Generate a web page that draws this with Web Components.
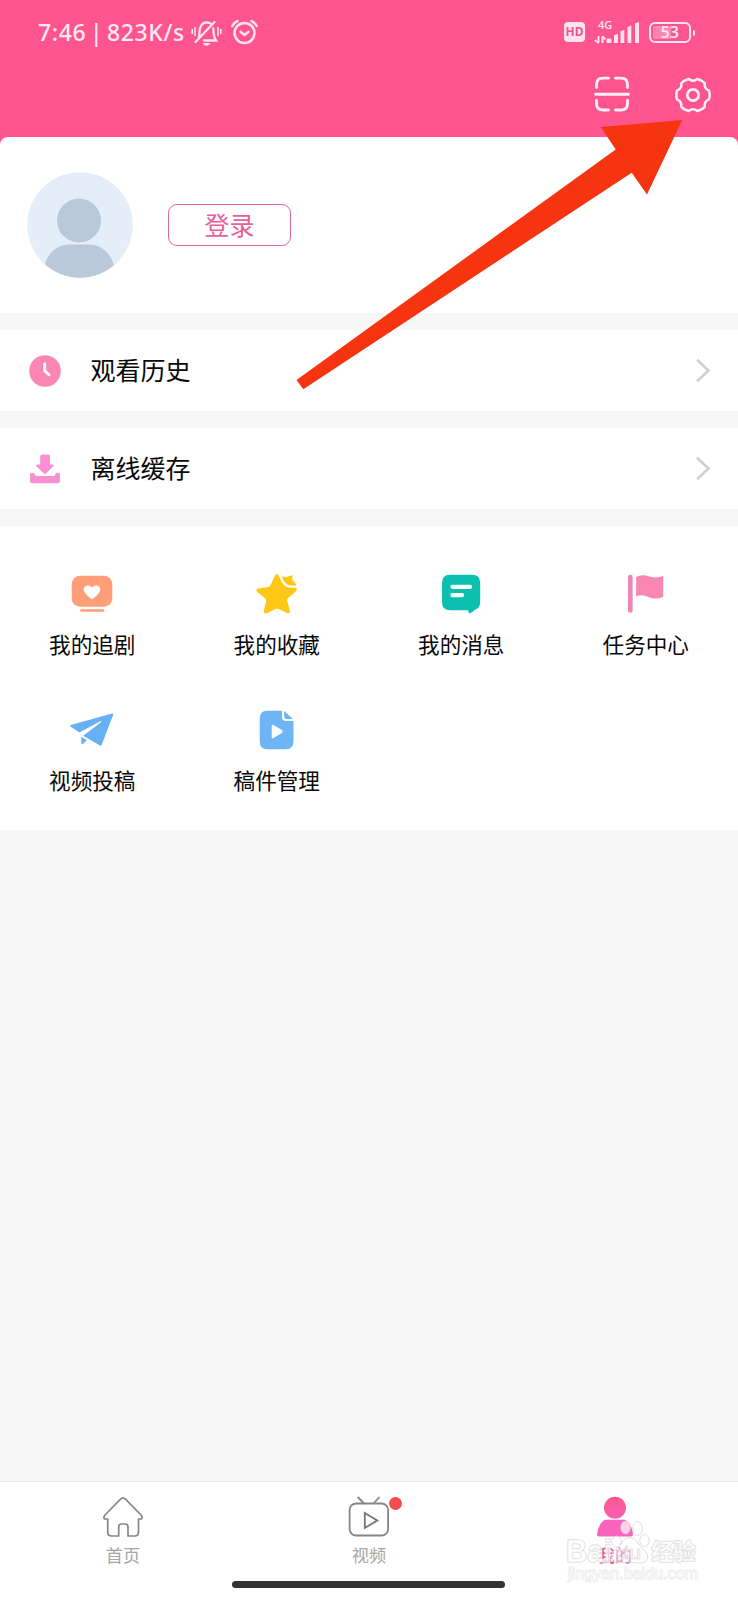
<!DOCTYPE html>
<html lang="zh-CN">
<head>
<meta charset="utf-8">
<title>我的</title>
<style>
html,body{margin:0;padding:0}
body{width:738px;height:1600px;overflow:hidden;background:#f7f7f7;font-family:"Noto Sans","Noto Sans CJK SC",sans-serif}
</style>
</head>
<body>
<my-app></my-app>
<script>
const define=(name,html)=>customElements.define(name,class extends HTMLElement{
  constructor(){super();const t=document.createElement('template');
    t.innerHTML=typeof html==='function'?html(this):html;
    this.attachShadow({mode:'open'}).append(t.content.cloneNode(true));}
});

// Six-lobed outline of the settings gear, centred on (18,18)
const gearPath=()=>{
  const p=(a,r)=>(18+r*Math.cos(a*Math.PI/180)).toFixed(2)+' '+(18+r*Math.sin(a*Math.PI/180)).toFixed(2);
  let d='M'+p(-15,16.6);
  for(let k=0;k<6;k++){const a=60*k;d+='Q'+p(a-8,16.7)+' '+p(a,16.7)+'Q'+p(a+8,16.7)+' '+p(a+15,16.6)+'Q'+p(a+30,12.6)+' '+p(a+45,16.6);}
  return d+'Z';
};

const icons={
bell:[31,26,`<g fill="none" stroke="#ffe3ef" stroke-width="2.3" stroke-linecap="round"><path d="M7 19.5C8.500 17 8.500 15 8.500 12C8.500 7 11 2.500 15.500 2.500C18 2.500 19.500 3 20.500 4.500M22.300 8.500C22.500 13 22.500 17 25 20.500H13M4.500 22L23.500 2"/><path d="M1.200 9.500v4M4 7.500v8M27 7.500v8M29.800 9.500v4" stroke-width="1.600"/></g><path d="M11.500 23h8q-1 2.700-4 2.700T11.500 23z" fill="#ffe3ef"/>`],
alarm:[27,25,`<g fill="none" stroke="#ffe3ef" stroke-width="2.500" stroke-linecap="round" stroke-linejoin="round"><circle cx="13.500" cy="13" r="10"/><path d="M9.500 11.700l4 3.300 4-3.300M1.300 6Q3 2.500 6.500 1M25.700 6Q24 2.500 20.500 1"/></g>`],
signal:[46,24,`<g fill="#ffe3ef"><rect x="12.500" y="18.500" width="5" height="4.500" rx="1.500"/><path d="M20 15.300l4-1.500V23h-4zM26.500 11.200l3.800-1.500V23h-3.800zM33.500 7l3.800-1.600V23h-3.800zM41 3.500L45 2V23h-4z"/></g><path d="M4.500 16v7M4.500 23L.8 20M8.500 23v-7M8.500 16.300l3 3" fill="none" stroke="#ffe3ef" stroke-width="1.900"/>`],
scan:[36,36,`<g fill="none" stroke="#fff0f6" stroke-width="2.800" stroke-linecap="round"><path d="M2.500 11.500V9Q2.500 2.200 9 2.200H14.500M21.500 2.200H27Q33.500 2.200 33.500 9V11.500M2.500 24.500V27.500Q2.500 34 9 34H14.500M21.500 34H27Q33.500 34 33.500 27.500V24.500"/><path d="M.5 18.300H35.500" stroke-linecap="butt" stroke-width="3"/></g>`],
gear:[36,36,`<g fill="none" stroke="#fff0f6" stroke-width="2.500" stroke-linejoin="round"><path d="${gearPath()}"/><circle cx="18" cy="18" r="5.700" stroke-width="2.700"/></g>`],
avatar:[106,106,`<clipPath id="c"><circle cx="53" cy="53" r="52.700"/></clipPath><circle cx="53" cy="53" r="52.700" fill="#e3eef8"/><g clip-path="url(#c)" fill="#bac9da"><circle cx="52" cy="48.500" r="22"/><path d="M15 110Q17 72.500 43 72.500H62Q86 72.500 91 110z"/></g>`],
clock:[32,32,`<circle cx="16" cy="16" r="15.800" fill="#fc87b4"/><path d="M15.700 9V15.800L20 19.800" fill="none" stroke="#fff" stroke-width="2.900" stroke-linecap="round" stroke-linejoin="round"/>`],
download:[32,30,`<path fill="#fb8fd2" d="M13.500.5H19Q21 .5 21 2.500V10.500H23.500Q25.800 10.500 24.200 12.300L17 19.500Q15.900 20.500 14.800 19.500L7.500 12.300Q6.200 10.500 8.200 10.500H11.200V2.500Q11.200.5 13.500.5zM1 20.500Q1 18.700 3 18.700H4Q5.600 18.700 5.600 20.300Q5.600 22 7.300 22H24.700Q26.300 22 26.300 20.300Q26.300 18.700 28 18.700H29Q31 18.700 31 20.500V27Q31 29.200 29 29.200H3Q1 29.200 1 27z"/>`],
chevron:[16,25,`<path d="M2 1.800L13.500 12.500 2 23.200" fill="none" stroke="#cfcfcf" stroke-width="2.600"/>`],
drama:[42,40,`<rect x=".7" y="1.700" width="40.600" height="31" rx="8.500" fill="#ff9e79"/><path d="M10.500 36.500H32" stroke="#ff9e79" stroke-width="2.700" stroke-linecap="round"/><path d="M21 25.300Q19.800 25.300 14.500 19.600C11 15.500 13.200 11.500 16.800 11.500Q19.300 11.500 21 13.500Q22.700 11.500 25.200 11.500C28.800 11.500 31 15.500 27.500 19.600Q22.200 25.300 21 25.300z" fill="#fff"/>`],
star:[42,40,`<path fill="#ffc817" d="M19 1.500Q21 -1 22.700 1.500L24.900 6.300Q27.600 13.700 34.900 13.700H39Q42.300 14.500 40 17.300L31.700 24.600Q30.900 25.600 31.200 27L33.900 36.500Q34.300 40.300 30.900 39L22.600 35Q21 34.200 19.400 35L11 39.200Q7.500 40 7.800 36.700L10.200 27Q10.400 25.600 9.400 24.600L1.300 18.100Q-1.100 15.600 2 14.600L12.200 13Q13.800 12.700 14.500 11.300z"/><path fill="#ffc817" d="M26 2.300L30.700 3.200Q31.500 3.200 32 2.500L36.200 1.300Q36.800 1.300 36.500 2.500L36.200 5.500Q36.200 6.400 37.500 6.900L39.700 9.600Q40.900 11.200 39.500 11.400H33.500Q27.500 9.800 26 2.300z"/>`],
message:[40,40,`<path fill="#0bc0ae" d="M9 .8H31Q39.200.8 39.200 9V27.500Q39.200 34 34.500 35.500L29 39.400Q27.500 39.400 27 36.200H9Q1 36.200 1 28V9Q1 .8 9 .8z"/><path d="M11.500 12.800H29M11.500 21.200H21" stroke="#fff" stroke-width="4.200" stroke-linecap="round"/>`],
flag:[38,40,`<path d="M3.300 3.200V36.500" stroke="#ef87b4" stroke-width="4.700" stroke-linecap="round"/><path fill="#fa86b2" d="M9.100 3Q14.500 -.1 22.500 2.500Q29.500 4.500 36.200 2V23Q28.500 26 21.500 23Q14.500 20 9.100 22.500z"/>`],
plane:[44,36,`<path fill="#67b0f3" d="M.3 14.200Q-.2 13.300.8 13L42 1.500Q43.700 1.200 43.200 2.700L31.700 32.800Q31.200 34.100 30 33.500L13.200 23.800 31.300 9.900Q31.300 9 30.300 9.300L9.300 20.600zM11.300 24.800L17 28.200 12.200 32.200Q11.300 32.500 11.300 31.500z"/>`],
file:[36,40,`<path fill="#6fb4f5" d="M8 .8H23V7Q23 11 27 11H34.500V31Q34.500 39.200 27 39.200H8Q.7 39.200.7 31V9Q.7.8 8 .8z"/><path fill="#6fb4f5" d="M25.200 1L34 9H27Q25.200 9 25.200 7z"/><path fill="#fff" d="M12.700 16Q12.700 14 14.500 15L23 20Q24.600 21.500 23 23L14.500 28Q12.700 29 12.700 27z"/>`],
home:[42,42,`<path fill="none" stroke="#858688" stroke-width="1.700" stroke-linejoin="round" d="M18.500 3.200Q21 .5 23.500 3.200L39 19Q41 21.500 39.500 23H36.500V36Q36.500 40 32.700 40H26V31Q26 28 23 28H19.500Q16.700 28 16.700 31V40H9.800Q5.700 40 5.700 36V23H2.500Q1 21.500 3 19z"/>`],
video:[42,42,`<g fill="none" stroke="#858688" stroke-width="1.800"><rect x="1.600" y="7.500" width="38.500" height="32" rx="6.500"/><path d="M9.700 1L16 7.500M31.500 1L25.500 7.500"/><path d="M16.800 17L29.300 24.500 16.800 32z" stroke="#737476"/></g>`],
person:[42,42,`<defs><linearGradient id="g" x1="0" y1="0" x2="0" y2="1"><stop stop-color="#fc5792"/><stop offset="1" stop-color="#f960b4"/></linearGradient></defs><circle cx="21" cy="11.800" r="11" fill="url(#g)"/><path fill="#fa63bd" d="M10.500 23.800H31.500Q38 28.500 39 38.500Q39 40.500 37 40.500H5Q3 40.500 3 38.500Q4 28.500 10.500 23.800z"/>`]
};
define('app-icon',h=>{const[w,ht,body]=icons[h.getAttribute('name')];
  return `<style>:host{display:block;flex:none;width:${w}px;height:${ht}px}svg{display:block;overflow:visible}</style><svg width="${w}" height="${ht}" viewBox="0 0 ${w} ${ht}">${body}</svg>`;});

define('status-bar',`<style>
:host{display:flex;align-items:flex-start;height:64px;padding:0 43px 0 38px;box-sizing:border-box;color:#ffe9f2;font-family:"Noto Sans",sans-serif}
.time{font-size:23px;line-height:30px;margin-top:17px;width:153px;letter-spacing:.65px;word-spacing:-3px;font-weight:500;white-space:nowrap}
.bell{margin-top:20px}.alarm{margin:20px 0 0 9px}
.right{margin-left:auto;display:flex;align-items:flex-start}
.hd{margin-top:22px;width:21px;height:20px;border-radius:4px;background:#ffe3ef;color:#f0558f;font:bold 12px/20px "Open Sans",sans-serif;text-align:center}
.net{position:relative;margin:20px 0 0 9px}
.net span{position:absolute;left:4px;top:-1px;font:600 11px/12px "Open Sans",sans-serif}
.bat{display:flex;align-items:center;margin:22px 0 0 9px}
.cell{box-sizing:border-box;width:42px;height:21px;border:2px solid #ffe3ef;border-radius:6px;padding:2px}
.fill{height:13px;background:linear-gradient(90deg,#ff86b1 0 53%,transparent 53%);border-radius:2px;text-align:center;font:600 15.500px/13px "Open Sans",sans-serif;letter-spacing:.5px;color:#fff0f6}
.tip{width:2px;height:6px;margin-left:2px;background:#ffe3ef;border-radius:0 2px 2px 0}
</style>
<div class="time">7:46 | 823K/s</div><app-icon class="bell" name="bell"></app-icon><app-icon class="alarm" name="alarm"></app-icon>
<div class="right"><div class="hd">HD</div><div class="net"><app-icon name="signal"></app-icon><span>4G</span></div><div class="bat"><div class="cell"><div class="fill">53</div></div><div class="tip"></div></div></div>`);

define('top-bar',`<style>
:host{display:flex;justify-content:flex-end;gap:45px;height:73px;padding:12px 27.500px 0 0;box-sizing:border-box}
app-icon+app-icon{margin-top:.5px}
</style><app-icon name="scan"></app-icon><app-icon name="gear"></app-icon>`);

define('profile-card',`<style>
:host{display:block;background:#ff558f}
.card{display:flex;align-items:center;gap:35px;height:176px;padding:0 27px;box-sizing:border-box;background:#fff;border-radius:8px 8px 0 0}
button{width:123px;height:42px;margin:0;padding:0;border:1px solid #dc6a9f;border-radius:9px;background:#fff;color:#e85e98;font:25px/38px "Noto Sans CJK SC",sans-serif}
span{position:relative;top:-1px}
</style><div class="card"><app-icon name="avatar"></app-icon><button><span><slot></slot></span></button></div>`);

define('list-row',h=>`<style>
:host{display:flex;align-items:center;height:81px;padding:0 27px 0 28.500px;box-sizing:border-box;background:#fff}
span{margin-left:30px;flex:1;font:25px/36px "Noto Sans CJK SC",sans-serif;color:#080808;padding-bottom:2.500px}
</style><app-icon name="${h.getAttribute('icon')}"></app-icon><span><slot></slot></span><app-icon name="chevron"></app-icon>`);

define('grid-item',h=>`<style>
:host{display:flex;flex-direction:column;align-items:center;height:136px}
.i{height:40px;display:flex;align-items:center}
span{margin-top:14px;font:21.600px/32px "Noto Sans CJK SC",sans-serif;color:#080808}
</style><div class="i"><app-icon name="${h.getAttribute('icon')}"></app-icon></div><span><slot></slot></span>`);

define('tool-grid',`<style>
:host{display:grid;grid-template-columns:repeat(4,1fr);align-content:start;height:304px;padding-top:48px;box-sizing:border-box;background:#fff}
</style><slot></slot>`);

define('nav-item',h=>`<style>
:host{display:flex;flex-direction:column;align-items:center;padding-top:14px;color:#a6a6a6}
:host([active]){color:#de5794}
.i{position:relative}
.dot{position:absolute;left:41px;top:1px;width:13px;height:13px;border-radius:50%;background:#f54e4e}
span{margin-top:5px;font:17.200px/24px "Noto Sans CJK SC",sans-serif}
:host([active]) span{font-weight:500}
</style><div class="i"><app-icon name="${h.getAttribute('icon')}"></app-icon>${h.hasAttribute('dot')?'<div class="dot"></div>':''}</div><span><slot></slot></span>`);

define('nav-bar',`<style>
:host{display:flex;flex-direction:column;align-items:center;height:119px;box-sizing:border-box;border-top:1px solid #e7e7e7;background:#fff}
.tabs{display:grid;grid-template-columns:repeat(3,1fr);width:100%;height:99px}
.bar{width:273px;height:7px;margin-right:1px;border-radius:4px;background:#333}
</style><div class="tabs"><slot></slot></div><div class="bar"></div>`);

define('pointer-arrow',`<style>:host{position:absolute;left:0;top:0;pointer-events:none}svg{display:block}</style>
<svg width="738" height="400"><path fill="#f63510" d="M682.300 120L600.700 127 615.700 149.500 296.500 380 303.300 389.300 631.700 172.700 647 194.500z"/></svg>`);

define('water-mark',`<style>:host{position:absolute;left:560px;top:1515px;pointer-events:none}svg{display:block}
text{font-family:"Liberation Sans","Noto Sans CJK SC",sans-serif;paint-order:stroke;stroke-linejoin:round}</style>
<svg width="150" height="75" fill="#fff" fill-opacity=".7" stroke="#d6d6d6" stroke-opacity=".8" stroke-width="1.500">
<text x="6" y="46.500" font-size="31" textLength="46" lengthAdjust="spacingAndGlyphs" font-weight="bold">Bai</text>
<g stroke-width="1"><ellipse cx="56.500" cy="26.500" rx="4.700" ry="5.500"/><ellipse cx="65.500" cy="12.500" rx="4.700" ry="6.500"/><ellipse cx="77.500" cy="13.500" rx="4.700" ry="7"/><ellipse cx="84.500" cy="25.500" rx="4.700" ry="6"/>
<path fill-opacity=".4" d="M70 22.500Q75 22.500 78 28Q81 33 86 37Q90 43 85 47Q81 49 72 47H66Q58 49 54 47Q49 42 54 36Q59 33 62 27Q65 22.500 70 22.500z"/></g>
<text x="57" y="44" font-size="19" textLength="24" lengthAdjust="spacingAndGlyphs" stroke-width="1" fill-opacity=".45">du</text>
<text x="91" y="45" font-size="23" font-weight="bold" textLength="45">经验</text>
<text x="8" y="64" font-size="16" textLength="130" stroke-width="1" stroke="#dcdcdc">jingyan.baidu.com</text></svg>`);

define('my-app',`<style>
:host{display:flex;flex-direction:column;position:relative;width:738px;height:1600px;background:#f7f7f7;overflow:hidden}
header{background:#ff558f;height:137px}
list-row,tool-grid{margin-top:17px}
nav-bar{margin-top:auto}
</style>
<header><status-bar></status-bar><top-bar></top-bar></header>
<profile-card>登录</profile-card>
<list-row icon="clock">观看历史</list-row>
<list-row icon="download">离线缓存</list-row>
<tool-grid><grid-item icon="drama">我的追剧</grid-item><grid-item icon="star">我的收藏</grid-item><grid-item icon="message">我的消息</grid-item><grid-item icon="flag">任务中心</grid-item><grid-item icon="plane">视频投稿</grid-item><grid-item icon="file">稿件管理</grid-item></tool-grid>
<nav-bar><nav-item icon="home">首页</nav-item><nav-item icon="video" dot>视频</nav-item><nav-item icon="person" active>我的</nav-item></nav-bar>
<pointer-arrow></pointer-arrow><water-mark></water-mark>`);
</script>
</body>
</html>
